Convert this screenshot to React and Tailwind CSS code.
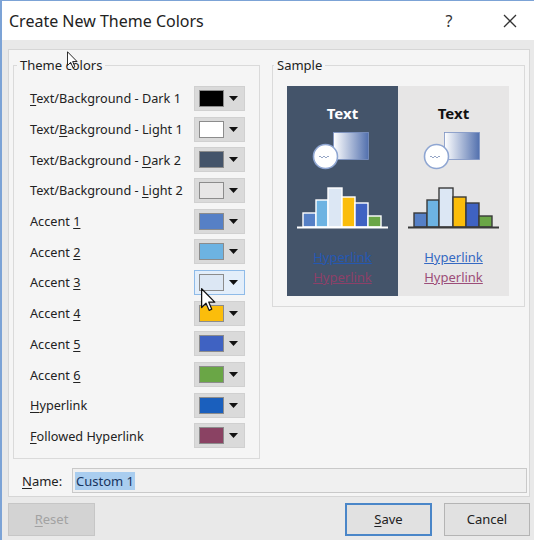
import React from "react";

const rows = [
  { pre: "", u: "T", post: "ext/Background - Dark 1", color: "#000000" },
  { pre: "Text/", u: "B", post: "ackground - Light 1", color: "#ffffff" },
  { pre: "Text/Background - ", u: "D", post: "ark 2", color: "#44546a" },
  { pre: "Text/Background - ", u: "L", post: "ight 2", color: "#e7e6e6" },
  { pre: "Accent ", u: "1", post: "", color: "#5680c6" },
  { pre: "Accent ", u: "2", post: "", color: "#6db3e2" },
  { pre: "Accent ", u: "3", post: "", color: "#dce7f4", hover: true },
  { pre: "Accent ", u: "4", post: "", color: "#fbbd0b" },
  { pre: "Accent ", u: "5", post: "", color: "#3f62c2" },
  { pre: "Accent ", u: "6", post: "", color: "#6aa646" },
  { pre: "", u: "H", post: "yperlink", color: "#1a5fbd" },
  { pre: "", u: "F", post: "ollowed Hyperlink", color: "#8a4263" },
];

const bars = [
  { x: 16, w: 13, top: 126, fill: "#5680c6" },
  { x: 29, w: 12, top: 113, fill: "#6db3e2" },
  { x: 41, w: 14, top: 101, fill: "#dce7f4" },
  { x: 55, w: 13, top: 110, fill: "#fbbd0b" },
  { x: 68, w: 13, top: 116, fill: "#3f62c2" },
  { x: 81, w: 13, top: 129, fill: "#6aa646" },
];

const Arrow = () => (
  <svg width="9" height="5" viewBox="0 0 9 5">
    <path d="M0 0 H9 L4.5 5 Z" fill="#111" />
  </svg>
);

const ColorButton = ({ color, hover }) => (
  <div
    className={`flex items-center h-[25px] w-[51px] border pl-[4px] ${
      hover ? "bg-[#e3eefa] border-[#8fbbe8]" : "bg-[#dadada] border-[#d0d0d0]"
    }`}
  >
    <div
      className="h-[17px] w-[25px] border border-[#8c8c8c]"
      style={{ backgroundColor: color }}
    />
    <div className="flex-1 flex justify-center pr-[2px]">
      <Arrow />
    </div>
  </div>
);

const SamplePanel = ({ dark }) => {
  const id = dark ? "gd" : "gl";
  const line = dark ? "#ffffff" : "#3a3a3a";
  return (
    <div
      className={`relative w-[111px] h-[210px] flex flex-col items-center ${
        dark ? "bg-[#44546a]" : "bg-[#e7e6e6]"
      }`}
    >
      <div
        className={`mt-[17px] text-[15px] leading-[20px] font-bold ${
          dark ? "text-white" : "text-[#111]"
        }`}
      >
        Text
      </div>
      <svg width="111" height="110" viewBox="0 40 111 110" className="mt-[4px]">
        <defs>
          <linearGradient id={id} x1="0" x2="1" y1="0" y2="0">
            <stop offset="0" stopColor="#ffffff" />
            <stop offset="1" stopColor="#5270ae" />
          </linearGradient>
        </defs>
        <rect x="46.5" y="45.5" width="35" height="27" fill={`url(#${id})`} stroke="#7d93c4" strokeWidth="0.8" />
        <circle cx="38.5" cy="69.5" r="12" fill="#ffffff" stroke="#8fa6d2" strokeWidth="1.6" />
        <path
          d="M32 70 q1 -2 2 0 t2 0 t2 0 t2 0 t2 0"
          fill="none"
          stroke="#8a9cc0"
          strokeWidth="0.9"
        />
        {bars.map((b, i) => (
          <rect
            key={i}
            x={b.x}
            y={b.top}
            width={b.w}
            height={140 - b.top}
            fill={b.fill}
            stroke={line}
            strokeWidth="1.4"
          />
        ))}
        <line x1="10" y1="140.5" x2="101" y2="140.5" stroke={line} strokeWidth="1.8" />
      </svg>
      <div
        className={`mt-[11px] text-[13px] leading-[18px] underline ${
          dark ? "text-[#2558b2]" : "text-[#3569c2]"
        }`}
      >
        Hyperlink
      </div>
      <div
        className={`mt-[2px] text-[13px] leading-[18px] underline ${
          dark ? "text-[#8d4068]" : "text-[#9c4d78]"
        }`}
      >
        Hyperlink
      </div>
    </div>
  );
};

const Cursor = ({ className, w, h }) => (
  <svg className={className} width={w} height={h} viewBox="0 0 12 19">
    <path
      d="M0.5 0.5 V15.5 L4 12 L6.5 17.8 L8.6 16.9 L6.2 11.2 H11 Z"
      fill="#ffffff"
      stroke="#111"
      strokeWidth="1"
      strokeLinejoin="round"
    />
  </svg>
);

export default function App() {
  return (
    <div
      className="relative w-[534px] h-[540px] overflow-hidden bg-[#e9e9e9] border-l-2 border-t border-[#7ca3d6] text-[#1e1e1e]"
      style={{ fontFamily: '"Noto Sans", "Open Sans", sans-serif' }}
    >
      {/* title bar */}
      <div className="flex items-center h-[39px] bg-white pl-[7px]">
        <div className="text-[16px] leading-[20px] text-[#222]">Create New Theme Colors</div>
        <div className="ml-auto w-[20px] text-center text-[16px] leading-[20px] text-[#333] mr-[44px]">?</div>
        <svg width="14" height="14" viewBox="0 0 14 14" className="mr-[17px]">
          <path d="M1 1 L13 13 M13 1 L1 13" stroke="#333" strokeWidth="1.3" />
        </svg>
      </div>

      <div className="pt-[9px]">
        {/* main panel */}
        <div className="ml-[6px] w-[522px] h-[448px] bg-[#f5f5f5] border border-[#d6d6d6] flex flex-col">
          <div className="flex items-start pt-[6px]">
            <fieldset className="ml-[4px] w-[247px] border border-[#dadada] pl-[16px] pr-[14px] pt-[9px] pb-[7px]">
              <legend className="-ml-[13px] px-[3px] text-[13px] leading-[18px] text-[#222]">Theme colors</legend>
              <div className="flex flex-col">
                {rows.map((r, i) => (
                  <div key={i} className="flex items-center justify-between h-[30.7px]">
                    <div className="text-[12.7px] leading-[18px] text-[#222]">
                      {r.pre}
                      <span className="underline underline-offset-2">{r.u}</span>
                      {r.post}
                    </div>
                    <ColorButton color={r.color} hover={r.hover} />
                  </div>
                ))}
              </div>
            </fieldset>
            <fieldset className="ml-[12px] w-[253px] border border-[#dadada] pl-[14px] pt-[12px] pb-[10px]">
              <legend className="-ml-[13px] px-[3px] text-[13px] leading-[18px] text-[#222]">Sample</legend>
              <div className="flex">
                <SamplePanel dark />
                <SamplePanel />
              </div>
            </fieldset>
          </div>
          <div className="flex items-center mt-[9px] pl-[13px] pr-[2px]">
            <div className="w-[50px] text-[13px] leading-[18px] text-[#222]">
              <span className="underline underline-offset-2">N</span>ame:
            </div>
            <div className="flex items-center flex-1 h-[25px] bg-[#f0f0f0] border border-[#c9c9c9] pl-[2px]">
              <span className="bg-[#a9cdef] text-[#17345e] text-[13px] leading-[18px] px-[1px]">Custom 1</span>
            </div>
          </div>
        </div>

        {/* buttons */}
        <div className="flex items-center mt-[6px] pl-[6px]">
          <div className="flex items-center justify-center w-[87px] h-[33px] bg-[#d3d3d3] border border-[#c6c6c6] text-[13px] text-[#a2a2a2]">
            <span><span className="underline underline-offset-2">R</span>eset</span>
          </div>
          <div className="ml-auto flex items-center justify-center w-[87px] h-[33px] bg-[#e1e1e1] border-2 border-[#4a86c8] text-[13px] text-[#222]">
            <span><span className="underline underline-offset-2">S</span>ave</span>
          </div>
          <div className="ml-[12px] mr-[4px] flex items-center justify-center w-[86px] h-[33px] bg-[#e1e1e1] border border-[#b4b4b4] text-[13px] text-[#222]">
            Cancel
          </div>
        </div>
      </div>

      {/* mouse pointers */}
      <Cursor className="absolute left-[65px] top-[50px]" w={11} h={18} />
      <Cursor className="absolute left-[199px] top-[287px]" w={15} h={24} />
    </div>
  );
}
